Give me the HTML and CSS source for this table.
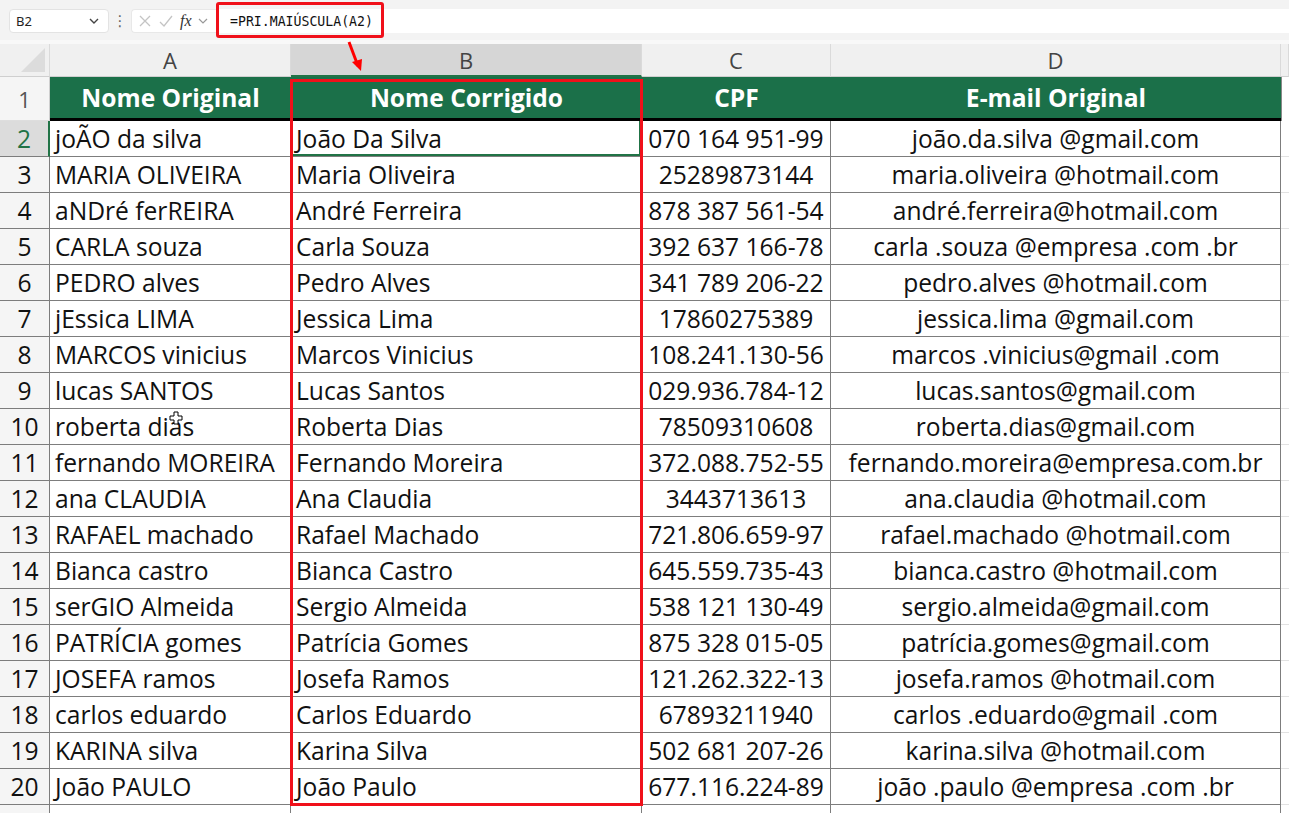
FILE: index.html
```html
<!DOCTYPE html>
<html lang="pt">
<head>
<meta charset="utf-8">
<title>Planilha</title>
<link rel="stylesheet" href="styles.css">
</head>
<body>
<div class="topbar">
  <div class="namebox"><span>B2</span>
    <svg class="chev" width="12" height="8" viewBox="0 0 12 8"><path d="M2 2 L6 6 L10 2" fill="none" stroke="#444" stroke-width="1.4"/></svg>
  </div>
  <div class="dots">⋮</div>
  <div class="fxgroup">
    <svg width="14" height="14" viewBox="0 0 14 14"><path d="M2 2 L12 12 M12 2 L2 12" stroke="#c4c4c4" stroke-width="1.3"/></svg>
    <svg width="16" height="14" viewBox="0 0 16 14"><path d="M2 8 L6 12 L14 2" fill="none" stroke="#c4c4c4" stroke-width="1.3"/></svg>
    <span class="fx">fx</span>
    <svg width="10" height="8" viewBox="0 0 10 8"><path d="M1 2 L5 6 L9 2" fill="none" stroke="#999" stroke-width="1.2"/></svg>
  </div>
  <div class="formula"><span>=PRI.MAIÚSCULA(A2)</span></div>
  <div class="hl-formula"></div>
</div>

<div class="sheet">
  <div class="row colhead">
    <div class="c rh corner"><svg width="30" height="30" viewBox="0 0 30 30"><path d="M28 4 L28 28 L4 28 Z" fill="#dcdcdc"/></svg></div>
    <div class="c ca">A</div><div class="c cb sel">B</div><div class="c cc">C</div><div class="c cd">D</div><div class="c ce"></div>
  </div>
  <div class="row hdr">
    <div class="c rh">1</div>
    <div class="c ca">Nome Original</div><div class="c cb">Nome Corrigido</div><div class="c cc">CPF</div><div class="c cd">E-mail Original</div><div class="c ce"></div>
  </div>
  <div class="row data"><div class="c rh act">2</div><div class="c ca">joÃO da silva</div><div class="c cb selcell">João Da Silva</div><div class="c cc">070 164 951-99</div><div class="c cd">joão.da.silva @gmail.com</div><div class="c ce"></div></div>
  <div class="row data"><div class="c rh">3</div><div class="c ca">MARIA OLIVEIRA</div><div class="c cb">Maria Oliveira</div><div class="c cc">25289873144</div><div class="c cd">maria.oliveira @hotmail.com</div><div class="c ce"></div></div>
  <div class="row data"><div class="c rh">4</div><div class="c ca">aNDré ferREIRA</div><div class="c cb">André Ferreira</div><div class="c cc">878 387 561-54</div><div class="c cd">andré.ferreira@hotmail.com</div><div class="c ce"></div></div>
  <div class="row data"><div class="c rh">5</div><div class="c ca">CARLA souza</div><div class="c cb">Carla Souza</div><div class="c cc">392 637 166-78</div><div class="c cd">carla .souza @empresa .com .br</div><div class="c ce"></div></div>
  <div class="row data"><div class="c rh">6</div><div class="c ca">PEDRO alves</div><div class="c cb">Pedro Alves</div><div class="c cc">341 789 206-22</div><div class="c cd">pedro.alves @hotmail.com</div><div class="c ce"></div></div>
  <div class="row data"><div class="c rh">7</div><div class="c ca">jEssica LIMA</div><div class="c cb">Jessica Lima</div><div class="c cc">17860275389</div><div class="c cd">jessica.lima @gmail.com</div><div class="c ce"></div></div>
  <div class="row data"><div class="c rh">8</div><div class="c ca">MARCOS vinicius</div><div class="c cb">Marcos Vinicius</div><div class="c cc">108.241.130-56</div><div class="c cd">marcos .vinicius@gmail .com</div><div class="c ce"></div></div>
  <div class="row data"><div class="c rh">9</div><div class="c ca">lucas SANTOS</div><div class="c cb">Lucas Santos</div><div class="c cc">029.936.784-12</div><div class="c cd">lucas.santos@gmail.com</div><div class="c ce"></div></div>
  <div class="row data"><div class="c rh">10</div><div class="c ca">roberta dias</div><div class="c cb">Roberta Dias</div><div class="c cc">78509310608</div><div class="c cd">roberta.dias@gmail.com</div><div class="c ce"></div></div>
  <div class="row data"><div class="c rh">11</div><div class="c ca">fernando MOREIRA</div><div class="c cb">Fernando Moreira</div><div class="c cc">372.088.752-55</div><div class="c cd">fernando.moreira@empresa.com.br</div><div class="c ce"></div></div>
  <div class="row data"><div class="c rh">12</div><div class="c ca">ana CLAUDIA</div><div class="c cb">Ana Claudia</div><div class="c cc">3443713613</div><div class="c cd">ana.claudia @hotmail.com</div><div class="c ce"></div></div>
  <div class="row data"><div class="c rh">13</div><div class="c ca">RAFAEL machado</div><div class="c cb">Rafael Machado</div><div class="c cc">721.806.659-97</div><div class="c cd">rafael.machado @hotmail.com</div><div class="c ce"></div></div>
  <div class="row data"><div class="c rh">14</div><div class="c ca">Bianca castro</div><div class="c cb">Bianca Castro</div><div class="c cc">645.559.735-43</div><div class="c cd">bianca.castro @hotmail.com</div><div class="c ce"></div></div>
  <div class="row data"><div class="c rh">15</div><div class="c ca">serGIO Almeida</div><div class="c cb">Sergio Almeida</div><div class="c cc">538 121 130-49</div><div class="c cd">sergio.almeida@gmail.com</div><div class="c ce"></div></div>
  <div class="row data"><div class="c rh">16</div><div class="c ca">PATRÍCIA gomes</div><div class="c cb">Patrícia Gomes</div><div class="c cc">875 328 015-05</div><div class="c cd">patrícia.gomes@gmail.com</div><div class="c ce"></div></div>
  <div class="row data"><div class="c rh">17</div><div class="c ca">JOSEFA ramos</div><div class="c cb">Josefa Ramos</div><div class="c cc">121.262.322-13</div><div class="c cd">josefa.ramos @hotmail.com</div><div class="c ce"></div></div>
  <div class="row data"><div class="c rh">18</div><div class="c ca">carlos eduardo</div><div class="c cb">Carlos Eduardo</div><div class="c cc">67893211940</div><div class="c cd">carlos .eduardo@gmail .com</div><div class="c ce"></div></div>
  <div class="row data"><div class="c rh">19</div><div class="c ca">KARINA silva</div><div class="c cb">Karina Silva</div><div class="c cc">502 681 207-26</div><div class="c cd">karina.silva @hotmail.com</div><div class="c ce"></div></div>
  <div class="row data"><div class="c rh">20</div><div class="c ca">João PAULO</div><div class="c cb">João Paulo</div><div class="c cc">677.116.224-89</div><div class="c cd">joão .paulo @empresa .com .br</div><div class="c ce"></div></div>
  <div class="row data"><div class="c rh"></div><div class="c ca"></div><div class="c cb"></div><div class="c cc"></div><div class="c cd"></div><div class="c ce"></div></div>

  <div class="hl-col"></div>
  <svg class="arrow" width="30" height="40" viewBox="0 0 30 40">
    <path d="M6 2 L15 26" stroke="#f00" stroke-width="3" fill="none"/>
    <path d="M9 22 L19 19 L18 31 Z" fill="#f00"/>
  </svg>
  <svg class="cursor" width="14" height="14" viewBox="0 0 14 14">
    <path d="M5 1 H9 V5 H13 V9 H9 V13 H5 V9 H1 V5 H5 Z" fill="#fff" stroke="#000" stroke-width="1"/>
  </svg>
</div>
</body>
</html>
```

FILE: styles.css
```css
* { box-sizing: border-box; }
html, body { margin: 0; padding: 0; }
body {
  width: 1289px;
  height: 813px;
  overflow: hidden;
  background: #fff;
  font-family: "Open Sans", "Noto Sans", sans-serif;
}

.topbar {
  position: relative;
  height: 44px;
  background: #f3f3f3;
  display: flex;
  align-items: flex-start;
  padding-top: 9px;
  padding-left: 9px;
  border-bottom: 4px solid #f8f8f8;
}
.namebox {
  width: 100px;
  height: 24px;
  background: #fff;
  border: 1px solid #e3e3e3;
  border-radius: 4px;
  display: flex;
  align-items: center;
  justify-content: space-between;
  padding: 0 8px 0 6px;
  font-family: "Noto Sans", sans-serif;
  font-size: 13px;
  color: #222;
}
.dots {
  width: 22px;
  text-align: center;
  color: #666;
  font-size: 15px;
  line-height: 24px;
  font-family: "DejaVu Sans", sans-serif;
}
.fxgroup {
  width: 85px;
  height: 24px;
  background: #fff;
  border: 1px solid #e8e8e8;
  border-right: none;
  border-radius: 4px 0 0 4px;
  display: flex;
  align-items: center;
  gap: 6px;
  padding-left: 6px;
}
.fx {
  font-family: "Liberation Serif", serif;
  font-style: italic;
  font-size: 16px;
  color: #333;
}
.formula {
  flex: 1;
  height: 24px;
  background: #fff;
  display: flex;
  align-items: center;
  padding-left: 14px;
  font-family: "DejaVu Sans Mono", "Liberation Mono", monospace;
  font-size: 13.2px;
  color: #111;
}
.hl-formula {
  position: absolute;
  left: 216px;
  top: 2px;
  width: 168px;
  height: 36px;
  border: 3px solid #f0101a;
  border-radius: 3px;
}

.sheet {
  position: relative;
}
.row {
  display: flex;
}
.c {
  flex: none;
  display: flex;
  align-items: center;
  white-space: nowrap;
  overflow: hidden;
}
.rh { width: 50px; justify-content: center; }
.ca { width: 241px; }
.cb { width: 351px; }
.cc { width: 189px; }
.cd { width: 450px; }
.ce { flex: 1; }

.colhead { height: 33px; background: #f0f0f0; }
.colhead .c {
  justify-content: center;
  font-size: 22px;
  color: #444;
  border-right: 1px solid #dadada;
  border-bottom: 1px solid #cfcfcf;
}
.colhead .corner { align-items: flex-end; justify-content: flex-end; padding: 0 2px 2px 0; }
.colhead .sel {
  background: #d6d6d6;
  border-bottom: 2px solid #217346;
}

.hdr { height: 44px; }
.hdr .c {
  background: #1b7049;
  color: #fff;
  font-weight: 700;
  font-size: 24.6px;
  justify-content: center;
  border-bottom: 3px solid #000;
}
.hdr .rh, .data .rh {
  background: #f5f5f5;
  color: #555;
  font-weight: 400;
  font-size: 22px;
  border-right: 1px solid #cfcfcf;
  border-bottom: 1px solid #dedede;
}
.hdr .ce { background: #fff; border-bottom: none; border-left: 1px solid #888; }

.data { height: 36px; }
.data .c {
  font-size: 24.6px;
  color: #111;
  border-right: 1px solid #7d7d7d;
  border-bottom: 1px solid #7d7d7d;
}
.data .ca, .data .cb { padding-left: 5px; }
.data .cc, .data .cd { justify-content: center; }
.data .ce { border-right: none; border-bottom: 1px solid #e2e2e2; }
.data .rh.act {
  background: #dcdcdc;
  color: #217346;
  border-right: 2px solid #217346;
}
.data .selcell {
  box-shadow: inset 0 -2px 0 #217346, inset -2px 0 0 #217346;
}

.hl-col {
  position: absolute;
  left: 290px;
  top: 35px;
  width: 353px;
  height: 727px;
  border: 3px solid #f0101a;
}
.arrow {
  position: absolute;
  left: 343px;
  top: -4px;
}
.cursor {
  position: absolute;
  left: 169px;
  top: 367px;
}
```
